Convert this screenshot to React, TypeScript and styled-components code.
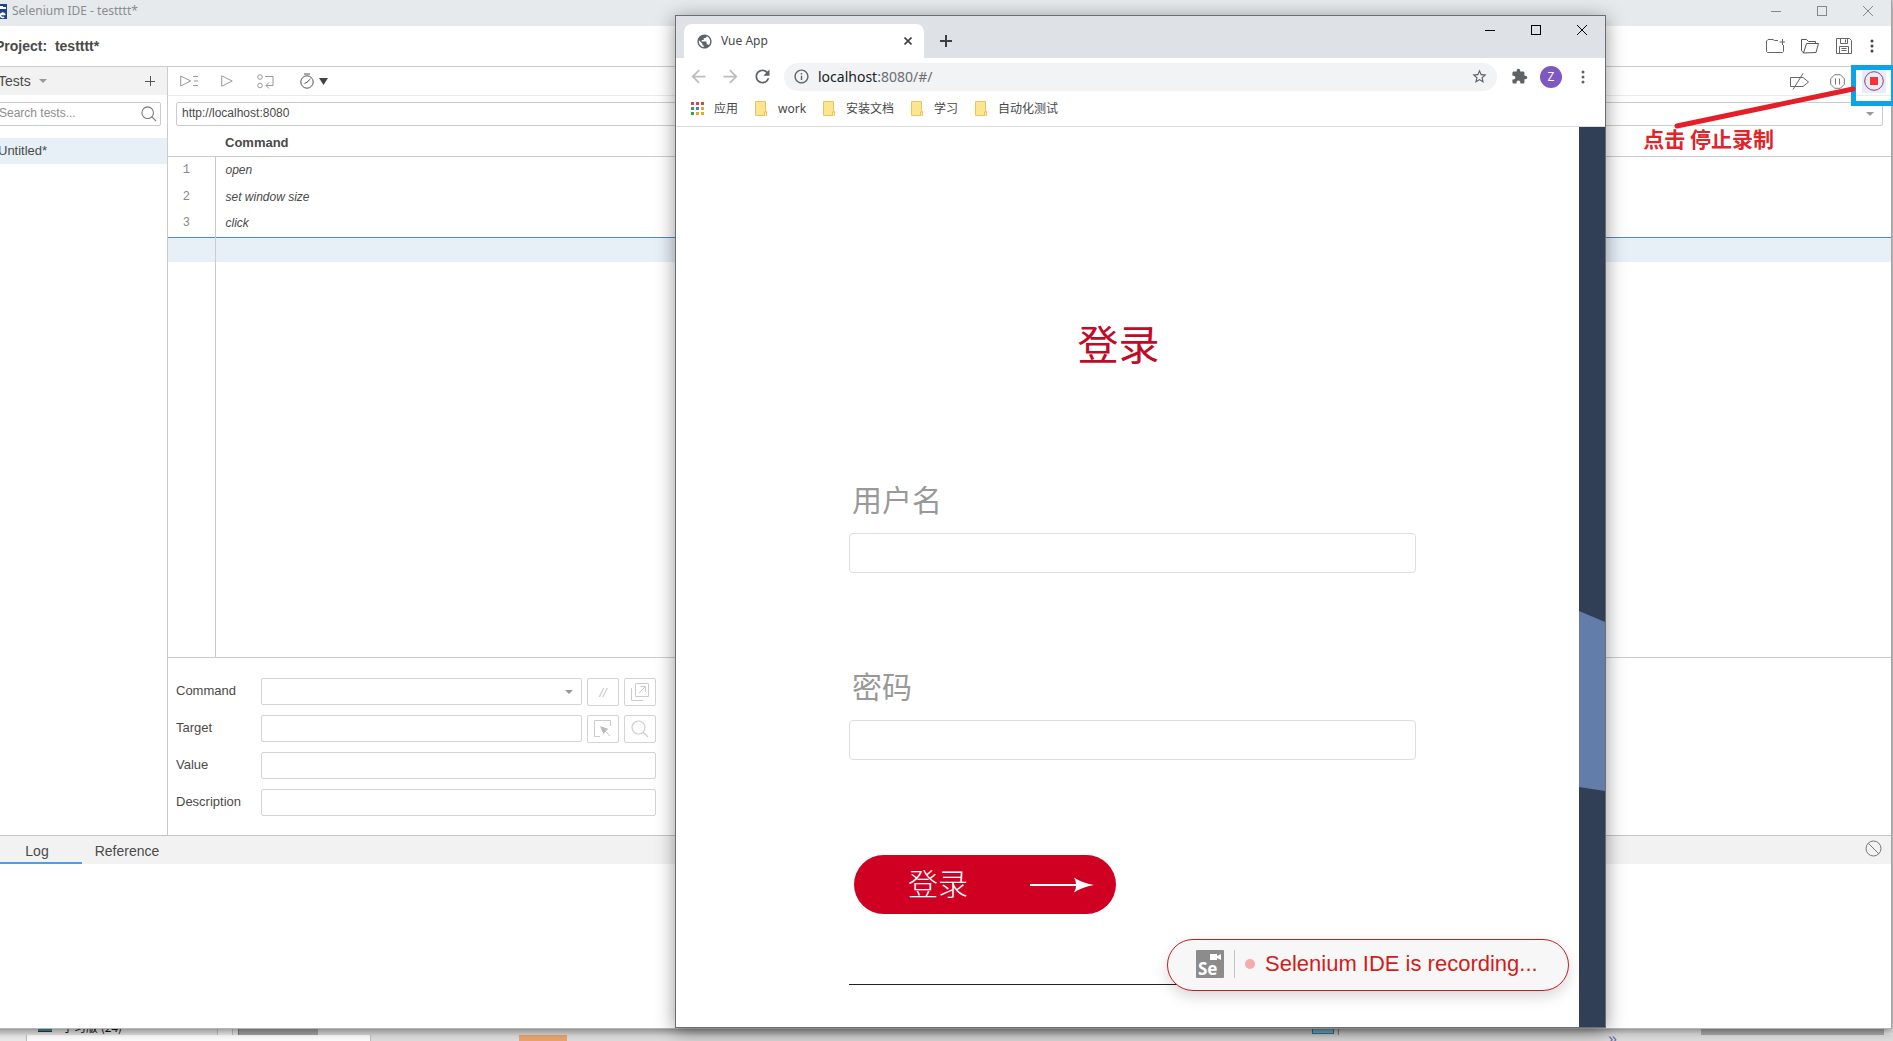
import React from "react";
import styled, { createGlobalStyle } from "styled-components";
import {
  MdArrowBack,
  MdArrowForward,
  MdExtension,
  MdInfoOutline,
  MdPublic,
  MdRefresh,
  MdStarBorder,
} from "react-icons/md";

const sans = `"Liberation Sans", "Noto Sans CJK SC", sans-serif`;
const ui = `"Noto Sans", "Noto Sans CJK SC", sans-serif`;
const cjk = `"Noto Sans CJK SC", sans-serif`;

const GlobalStyle = createGlobalStyle`
  * { box-sizing: border-box; }
  body { margin: 0; overflow: hidden; font-family: ${sans}; color: #4a4a4a; }
  button, input, select { font: inherit; color: inherit; margin: 0; }
  h1, h2, p { margin: 0; }
  svg { display: block; flex: none; }
`;

/* ---------- desktop ---------- */

const Desktop = styled.div`
  position: relative;
  height: 100vh;
  overflow: hidden;
  display: flex;
  flex-direction: column;
  justify-content: flex-end;
  background: #dedede;
`;

const UpperStrip = styled.div`
  display: flex;
  height: 7px;
  overflow: hidden;
  background: #d3d3d3;
`;

const LowerStrip = styled.div`
  display: flex;
  height: 6px;
  overflow: hidden;
  background: #dadada;
`;

const Piece = styled.div<{ $w?: number; $bg?: string; $edge?: string }>`
  display: flex;
  align-items: flex-end;
  flex: ${(p) => (p.$w ? `0 0 ${p.$w}px` : "1")};
  height: 100%;
  background: ${(p) => p.$bg || "transparent"};
  border: 0 solid ${(p) => p.$edge || "transparent"};
  border-right-width: ${(p) => (p.$edge ? 1 : 0)}px;
`;

const TealChip = styled.span`
  align-self: flex-start;
  width: 14px;
  height: 4px;
  margin-left: 38px;
  background: #3d8c92;
  border-bottom: 1px solid #2b3d42;
`;

const HiddenLabel = styled.span`
  margin: 0 0 1px 10px;
  font: 12px/14px ${cjk};
  color: #111;
  white-space: nowrap;
`;

const BlueChip = styled.span`
  width: 22px;
  height: 6px;
  align-self: flex-start;
  margin: 0 4px 0 auto;
  background: #8dbdd6;
  border: 1px solid #2f81a8;
  border-top: 0;
`;

const More = styled.span`
  font: 16px/8px ${sans};
  color: #6a6aa8;
  align-self: flex-start;
`;

/* ---------- Selenium IDE window ---------- */

const IdeWindow = styled.section`
  position: absolute;
  inset: 0 1px 12px -8px;
  display: flex;
  flex-direction: column;
  background: #fff;
  border-right: 1px solid #a4a4a4;
  border-bottom: 1px solid #b5b5b5;
  box-shadow: 0 2px 8px rgba(0, 0, 0, 0.45);
`;

const IdeTitle = styled.header`
  display: flex;
  height: 26px;
  padding-bottom: 4px;
  align-items: center;
  background: #e6eaed;
  color: #8a8c8e;
  font: 12px/16px ${ui};
`;

const IdeTitleText = styled.span`
  flex: 1;
  padding-left: 5px;
`;

const WindowButton = styled.button`
  width: 46px;
  height: 20px;
  padding: 0;
  border: 0;
  background: none;
  display: grid;
  place-items: center;
`;

const IdeHeader = styled.div`
  display: flex;
  align-items: center;
  height: 41px;
  padding: 0 14px 0 3px;
  gap: 12px;
  border-bottom: 1px solid #ccc;
`;

const ProjectName = styled.h1`
  flex: 1;
  font-size: 14px;
  line-height: 18px;
  font-weight: bold;
  white-space: pre;
`;

const IconButton = styled.button<{ $w?: number; $active?: boolean; $end?: boolean }>`
  display: flex;
  align-items: center;
  justify-content: ${(p) => (p.$end ? "flex-end" : "center")};
  gap: 5px;
  width: ${(p) => p.$w || 24}px;
  height: 24px;
  padding: 0;
  border: 0;
  background: ${(p) => (p.$active ? "#e3edfb" : "none")};
`;

const IdeBody = styled.div`
  display: flex;
  flex: 1;
  min-height: 0;
`;

const Sidebar = styled.aside`
  width: 176px;
  border-right: 1px solid #ccc;
`;

const SidebarHead = styled.div`
  display: flex;
  align-items: center;
  height: 28px;
  padding: 0 5px 0 6px;
  gap: 8px;
  background: #f2f2f2;
  font-size: 14px;
`;

const Grow = styled.span`
  flex: 1;
`;

const SearchBox = styled.label`
  display: flex;
  align-items: center;
  height: 24px;
  margin: 7px 6px 12px 0;
  padding: 0 3px 0 6px;
  border: 1px solid #ccc;
  border-radius: 2px;
`;

const BareInput = styled.input`
  flex: 1;
  min-width: 0;
  padding: 0 0 2px;
  border: 0;
  outline: 0;
  background: none;
  font-size: 12px;
  line-height: 16px;
  &::placeholder {
    color: #8e8e8e;
  }
`;

const TestItem = styled.div`
  height: 26px;
  padding-left: 6px;
  background: #e7eff7;
  font-size: 13px;
  line-height: 26px;
`;

const Editor = styled.main`
  display: flex;
  flex: 1;
  flex-direction: column;
`;

const Toolbar = styled.div`
  display: flex;
  align-items: center;
  gap: 14px;
  height: 29px;
  padding: 0 5px 0 9px;
  border-bottom: 1px solid #ebebeb;
`;

const ToolbarEnd = styled.div`
  display: flex;
  gap: 13px;
  margin-left: auto;
`;

const UrlBox = styled.div`
  display: flex;
  align-items: center;
  height: 24px;
  margin: 6px 8px 0;
  padding: 0 2px 0 5px;
  border: 1px solid #ccc;
  border-radius: 2px;
`;

const TableArea = styled.div`
  flex: 1;
  display: flex;
`;

const CommandTable = styled.table`
  width: 100%;
  height: 100%;
  border-collapse: collapse;
  font-size: 12px;
  font-style: italic;
`;

const HeadCell = styled.th<{ $w?: number }>`
  width: ${(p) => (p.$w ? `${p.$w}px` : "auto")};
  height: 30px;
  padding: 5px 0 0 10px;
  border-bottom: 1px solid #ccc;
  text-align: left;
  font: bold 13px/16px ${sans};
`;

const NumberCell = styled.td`
  width: 47px;
  height: 27px;
  padding: 0 10px 0 0;
  border-right: 1px solid #ccc;
  text-align: center;
  color: #888;
  font: 12px/16px "Liberation Mono", monospace;
`;

const CommandCell = styled.td`
  padding: 0 0 0 10px;
`;

const BlankRow = styled.tr`
  background: #e7eff7;
  border-top: 1px solid #4f8ac9;
  td {
    height: 25px;
  }
`;

const RestRow = styled.tr`
  td {
    height: auto;
  }
`;

const DetailForm = styled.form`
  display: flex;
  flex-direction: column;
  gap: 9px;
  padding: 20px 8px 18px;
  border-top: 1px solid #ccc;
`;

const FieldRow = styled.div`
  display: flex;
  align-items: flex-start;
  gap: 5px;
  width: 480px;
  height: 28px;
`;

const FieldLabel = styled.label`
  width: 80px;
  font-size: 13px;
  line-height: 26px;
`;

const FieldInput = styled.input`
  flex: 1;
  min-width: 0;
  height: 27px;
  border: 1px solid #d4d4d4;
  border-radius: 2px;
  background: #fff;
`;

const SelectWrap = styled.div`
  display: flex;
  flex: 1;
  align-items: center;
  height: 27px;
  padding-right: 8px;
  border: 1px solid #d4d4d4;
  border-radius: 2px;
`;

const FieldSelect = styled.select`
  flex: 1;
  height: 25px;
  border: 0;
  background: none;
  appearance: none;
`;

const FieldButton = styled.button`
  display: grid;
  place-items: center;
  width: 32px;
  height: 28px;
  padding: 0;
  border: 1px solid #d4d4d4;
  border-radius: 2px;
  background: #fff;
  color: #c2c2c2;
  font-size: 13px;
  font-style: italic;
`;

const Console = styled.section`
  height: 193px;
  border-top: 1px solid #c4c4c4;
`;

const ConsoleTabs = styled.div`
  display: flex;
  align-items: stretch;
  height: 28px;
  padding-right: 8px;
  background: #f2f2f2;
`;

const ConsoleTab = styled.button<{ $active?: boolean }>`
  width: 90px;
  padding: 3px 0 0;
  border: 0;
  border-bottom: 2px solid ${(p) => (p.$active ? "#4a9fe8" : "transparent")};
  background: none;
  font-size: 14px;
  line-height: 20px;
`;

/* ---------- Chrome window ---------- */

const ChromeWindow = styled.section`
  position: absolute;
  inset: 15px 287px 13px 675px;
  display: flex;
  flex-direction: column;
  border: 1px solid #6c6f72;
  background: #fff;
  box-shadow: 0 3px 18px rgba(0, 0, 0, 0.42);
`;

const TabStrip = styled.div`
  display: flex;
  align-items: flex-start;
  height: 42px;
  padding-left: 8px;
  background: #dee1e6;
`;

const Tab = styled.div`
  display: flex;
  align-items: center;
  align-self: flex-end;
  gap: 8px;
  width: 240px;
  height: 34px;
  padding: 0 12px;
  border-radius: 8px 8px 0 0;
  background: #fff;
  color: #45484c;
  font: 12px/16px ${ui};
`;

const NewTab = styled.button`
  width: 44px;
  height: 42px;
  padding: 8px 0 0;
  border: 0;
  background: none;
  display: grid;
  place-items: center;
`;

const ChromeControls = styled.div`
  display: flex;
  margin-left: auto;
  padding-top: 4px;
`;

const AddressRow = styled.div`
  display: flex;
  align-items: center;
  gap: 10px;
  height: 37px;
  padding: 0 11px;
  color: #5f6368;
`;

const NavButton = styled.button<{ $dim?: boolean }>`
  display: grid;
  place-items: center;
  width: 22px;
  height: 22px;
  padding: 0;
  border: 0;
  background: none;
  color: ${(p) => (p.$dim ? "#babcbe" : "#5f6368")};
`;

const Omnibox = styled.div`
  display: flex;
  flex: 1;
  align-items: center;
  gap: 8px;
  height: 28px;
  margin: 0 1px;
  padding: 0 9px;
  border-radius: 14px;
  background: #f1f3f4;
`;

const Address = styled.span`
  flex: 1;
  font: 14px/20px ${ui};
  color: #6a6e73;
  b {
    font-weight: normal;
    color: #202124;
  }
`;

const Avatar = styled.button`
  width: 22px;
  height: 22px;
  padding: 0;
  border: 0;
  border-radius: 50%;
  background: #7e57c2;
  color: #fff;
  font: 12px/22px ${ui};
`;

const Bookmarks = styled.nav`
  display: flex;
  align-items: center;
  gap: 17px;
  height: 32px;
  padding: 0 15px 4px;
  border-bottom: 1px solid #dadce0;
`;

const Bookmark = styled.a`
  display: flex;
  align-items: center;
  gap: 10px;
  color: #45484c;
  font: 12px/20px ${ui};
  text-decoration: none;
`;

const Page = styled.div`
  display: flex;
  flex: 1;
  min-height: 0;
`;

const LoginForm = styled.form`
  flex: 1;
  display: flex;
  flex-direction: column;
  padding: 191px 163px 0 173px;
  font-family: ${cjk};
`;

const LoginTitle = styled.h2`
  padding-right: 28px;
  margin-bottom: 112px;
  color: #c00a28;
  text-align: center;
  font-size: 41px;
  line-height: 48px;
  font-weight: 400;
`;

const LoginLabel = styled.label`
  margin-bottom: 15px;
  padding-left: 3px;
  color: #999;
  font-size: 30px;
  line-height: 40px;
`;

const LoginInput = styled.input`
  height: 40px;
  margin-bottom: 92px;
  padding: 0 12px;
  border: 1px solid #dcdfe0;
  border-radius: 4px;
`;

const LoginButton = styled.button`
  display: flex;
  align-items: center;
  justify-content: space-between;
  width: 262px;
  height: 59px;
  margin: 3px 0 70px 5px;
  padding: 0 22px 0 54px;
  border: 0;
  border-radius: 30px;
  background: #d00023;
  color: #fff;
  font-size: 30px;
  line-height: 40px;
  font-weight: 300;
`;

const ButtonText = styled.span`
  padding-bottom: 5px;
`;

const Rule = styled.hr`
  width: 100%;
  height: 1px;
  margin: 0;
  border: 0;
  background: #222;
`;

const Recording = styled.div`
  position: absolute;
  right: 36px;
  bottom: 36px;
  display: flex;
  align-items: center;
  width: 402px;
  height: 52px;
  padding: 0 28px 2px;
  gap: 10px;
  border: 1px solid #c2201c;
  border-radius: 26px;
  background: #f7f7f7;
  box-shadow: 0 6px 14px rgba(0, 0, 0, 0.15);
  color: #d21d1a;
  font: 22px/28px ${sans};
  white-space: nowrap;
`;

const SeBadge = styled.span`
  position: relative;
  display: flex;
  align-items: flex-end;
  width: 28px;
  height: 28px;
  padding-left: 2px;
  border-radius: 1px;
  background: #8c8c8c;
  color: #fff;
  font: bold 17px/18px ${ui};
`;

const Camera = styled.svg`
  position: absolute;
  top: 4px;
  right: 3px;
`;

const Divider = styled.span`
  width: 1px;
  height: 28px;
  background: #c4c4c4;
`;

const Dot = styled.span`
  width: 10px;
  height: 10px;
  border-radius: 50%;
  background: #f3abab;
`;

/* ---------- annotation ---------- */

const Highlight = styled.div`
  position: absolute;
  top: 65px;
  right: -3px;
  width: 45px;
  height: 41px;
  border: 5px solid #0ea2e6;
`;

const Pointer = styled.svg`
  position: absolute;
  top: 84px;
  right: 36px;
`;

const Note = styled.p`
  position: absolute;
  top: 123px;
  right: 119px;
  color: #e1232a;
  font: bold 21px/30px ${cjk};
`;

const Min = ({ c }: { c: string }) => (
  <svg width="10" height="10" stroke={c}>
    <path d="M0 5.5h10" />
  </svg>
);
const Max = ({ c }: { c: string }) => (
  <svg width="10" height="10" stroke={c} fill="none">
    <rect x=".5" y=".5" width="9" height="9" />
  </svg>
);
const Close = ({ c }: { c: string }) => (
  <svg width="10" height="10" stroke={c}>
    <path d="M0 0l10 10M10 0L0 10" />
  </svg>
);
const Caret = ({ c = "#999", w = 8, h = 4 }: { c?: string; w?: number; h?: number }) => (
  <svg width={w} height={h} fill={c}>
    <path d={`M0 0h${w}L${w / 2} ${h}z`} />
  </svg>
);
const Magnifier = ({ c, size = 18 }: { c: string; size?: number }) => (
  <svg width={size} height={size} viewBox="0 0 18 18" fill="none" stroke={c} strokeWidth="1.2">
    <circle cx="7.5" cy="7.5" r="6.5" />
    <path d="M12 12l5 5" />
  </svg>
);
const Folder = () => (
  <svg width="13" height="15" viewBox="0 0 13 15">
    <path d="M.5 .5h10v10h1v4H.5z" fill="#fde58f" stroke="#e6c55f" />
    <path d="M9.500 14.500v-3.500h2v3.500" fill="#fff0b5" stroke="#e6c55f" />
  </svg>
);
const Dots = ({ c }: { c: string }) => (
  <svg width="4" height="14" fill={c}>
    <circle cx="2" cy="2" r="1.500" />
    <circle cx="2" cy="7" r="1.500" />
    <circle cx="2" cy="12" r="1.500" />
  </svg>
);
const AppsGrid = () => {
  const colors = ["#d04a44", "#d04a44", "#d04a44", "#3c9a5c", "#4180d0", "#e2a92c", "#3c9a5c", "#e2a92c", "#e2a92c"];
  return (
    <svg width="13" height="13">
      {colors.map((c, i) => (
        <rect key={i} x={(i % 3) * 5} y={Math.floor(i / 3) * 5} width="3" height="3" fill={c} />
      ))}
    </svg>
  );
};

const bookmarks = ["work", "安装文档", "学习", "自动化测试"];
const commands = ["open", "set window size", "click"];

function SeleniumIde() {
  return (
    <IdeWindow>
      <IdeTitle>
        <svg width="15" height="15" viewBox="0 0 15 15">
          <path d="M0 0h15v15H0z" fill="#1d4489" />
          <path d="M7 2h4v1h3v2H7z" fill="#fff" />
          <path d="M9 10.500h4.200M13 11a2.300 2.300 0 1 0-.8 2" stroke="#fff" strokeWidth="1.400" fill="none" />
        </svg>
        <IdeTitleText>Selenium IDE - testttt*</IdeTitleText>
        <WindowButton aria-label="Minimize"><Min c="#85888a" /></WindowButton>
        <WindowButton aria-label="Maximize"><Max c="#85888a" /></WindowButton>
        <WindowButton aria-label="Close"><Close c="#85888a" /></WindowButton>
      </IdeTitle>
      <IdeHeader>
        <ProjectName>{"Project:  testttt*"}</ProjectName>
        <IconButton $w={22} aria-label="New project">
          <svg width="20" height="16" fill="none" stroke="#666">
            <path d="M12 2.500H8.500L7 1.500H2L.5 3v10.500l1 1h15l1-1V7M13.500 4h5.500M16.500 1v6" />
          </svg>
        </IconButton>
        <IconButton $w={22} aria-label="Open project">
          <svg width="18" height="16" fill="none" stroke="#555">
            <path d="M2.500 15L.5 12.500v-11h5l2 2h7v2M2.500 15l3-9.500h12L15 14.500z" strokeLinejoin="round" />
          </svg>
        </IconButton>
        <IconButton $w={22} aria-label="Save project">
          <svg width="16" height="16" fill="none" stroke="#666">
            <path d="M.5 .5h13l2 2v13H.5zM4.500 .5v5h7v-5M9.500 1.500v3M3.500 15V8.500h9V15M5.500 10.500h5M5.500 12.500h5" />
          </svg>
        </IconButton>
        <IconButton $w={10} aria-label="Menu"><Dots c="#444" /></IconButton>
      </IdeHeader>
      <IdeBody>
        <Sidebar>
          <SidebarHead>
            <span>Tests</span>
            <Caret />
            <Grow />
            <IconButton aria-label="Add test">
              <svg width="10" height="10" stroke="#555">
                <path d="M0 5.500h10M5.500 0v10" />
              </svg>
            </IconButton>
          </SidebarHead>
          <SearchBox>
            <BareInput placeholder="Search tests..." aria-label="Search tests" />
            <Magnifier c="#777" size={16} />
          </SearchBox>
          <TestItem>Untitled*</TestItem>
        </Sidebar>
        <Editor>
          <Toolbar>
            <IconButton aria-label="Run all tests">
              <svg width="19" height="12" fill="none" stroke="#999">
                <path d="M.7 1v10l10-5zM13 1.500h5M14 6h4M13 10.500h5" />
              </svg>
            </IconButton>
            <IconButton aria-label="Run current test">
              <svg width="12" height="12" fill="none" stroke="#999">
                <path d="M.7 .8v10.400l10.500-5.200z" />
              </svg>
            </IconButton>
            <IconButton aria-label="Step over">
              <svg width="17" height="15" fill="none" stroke="#999">
                <circle cx="3" cy="3" r="2.300" />
                <circle cx="3" cy="11.500" r="2.300" />
                <path d="M8 2.500h8v9H9M12 8.500l-3 3 3 3" />
              </svg>
            </IconButton>
            <IconButton $w={37} $end aria-label="Test speed">
              <svg width="14" height="16" fill="none" stroke="#555">
                <circle cx="7" cy="9" r="6.200" />
                <path d="M4 1h6M7 9l3.500-3M4.500 10.500l3-1.500" />
              </svg>
              <Caret c="#444" w={9} h={7} />
            </IconButton>
            <ToolbarEnd>
              <IconButton aria-label="Disable breakpoints">
                <svg width="20" height="17" fill="none" stroke="#666">
                  <path d="M.5 4.500h12.500l5.500 4.500-5.500 4.500H.5zM3 16.500L13 .5" />
                </svg>
              </IconButton>
              <IconButton aria-label="Pause on exceptions">
                <svg width="15" height="15" fill="none" stroke="#777">
                  <path d="M4.700 .7h5.600l4 4v5.600l-4 4H4.700l-4-4V4.700zM5.500 4.500v6M9.500 4.500v6" />
                </svg>
              </IconButton>
              <IconButton $active aria-label="Stop recording">
                <svg width="20" height="20" fill="none">
                  <circle cx="10" cy="10" r="9.300" stroke="#a43a50" />
                  <path d="M6 6h8v8H6z" fill="#fb3034" />
                </svg>
              </IconButton>
            </ToolbarEnd>
          </Toolbar>
          <UrlBox>
            <BareInput defaultValue="http://localhost:8080" aria-label="Base URL" />
            <IconButton $w={20} aria-label="Recent URLs"><Caret /></IconButton>
          </UrlBox>
          <TableArea>
            <CommandTable>
              <thead>
                <tr>
                  <HeadCell $w={47} />
                  <HeadCell>Command</HeadCell>
                </tr>
              </thead>
              <tbody>
                {commands.map((c, i) => (
                  <tr key={c}>
                    <NumberCell>{i + 1}</NumberCell>
                    <CommandCell>{c}</CommandCell>
                  </tr>
                ))}
                <BlankRow>
                  <NumberCell />
                  <CommandCell />
                </BlankRow>
                <RestRow>
                  <NumberCell />
                  <CommandCell />
                </RestRow>
              </tbody>
            </CommandTable>
          </TableArea>
          <DetailForm>
            <FieldRow>
              <FieldLabel htmlFor="command">Command</FieldLabel>
              <SelectWrap>
                <FieldSelect id="command" />
                <Caret />
              </SelectWrap>
              <FieldButton type="button" aria-label="Disable command">//</FieldButton>
              <FieldButton type="button" aria-label="Open in new window">
                <svg width="18" height="18" fill="none" stroke="#ccc">
                  <path d="M4.500 .5h13v13h-13zM.5 5v12.500H12M8 10l6-6M9.500 3.500h5v5" />
                </svg>
              </FieldButton>
            </FieldRow>
            <FieldRow>
              <FieldLabel htmlFor="target">Target</FieldLabel>
              <FieldInput id="target" />
              <FieldButton type="button" aria-label="Select target in page">
                <svg width="18" height="18" fill="none" stroke="#ccc">
                  <path d="M6 16.500H.5V.5h16V6M11 11l5 5" />
                  <path d="M6 6l8.500 3-3 2-1.800 3.500z" fill="#bbb" stroke="none" />
                </svg>
              </FieldButton>
              <FieldButton type="button" aria-label="Find target in page"><Magnifier c="#ccc" /></FieldButton>
            </FieldRow>
            <FieldRow>
              <FieldLabel htmlFor="value">Value</FieldLabel>
              <FieldInput id="value" />
            </FieldRow>
            <FieldRow>
              <FieldLabel htmlFor="description">Description</FieldLabel>
              <FieldInput id="description" />
            </FieldRow>
          </DetailForm>
        </Editor>
      </IdeBody>
      <Console>
        <ConsoleTabs>
          <ConsoleTab $active>Log</ConsoleTab>
          <ConsoleTab>Reference</ConsoleTab>
          <Grow />
          <IconButton $w={20} aria-label="Clear log">
            <svg width="17" height="17" fill="none" stroke="#777">
              <circle cx="8.500" cy="8.500" r="7.500" />
              <path d="M3.200 3.200l10.600 10.600" />
            </svg>
          </IconButton>
        </ConsoleTabs>
      </Console>
    </IdeWindow>
  );
}

function Chrome() {
  return (
    <ChromeWindow>
      <TabStrip>
        <Tab>
          <MdPublic size={17} color="#5f6368" />
          <span>Vue App</span>
          <Grow />
          <svg width="8" height="8" stroke="#3c4043" strokeWidth="1.600">
            <path d="M.5 .5l7 7M7.500 .5l-7 7" />
          </svg>
        </Tab>
        <NewTab aria-label="New tab">
          <svg width="12" height="12" stroke="#3c4043" strokeWidth="2">
            <path d="M0 6h12M6 0v12" />
          </svg>
        </NewTab>
        <ChromeControls>
          <WindowButton aria-label="Minimize"><Min c="#000" /></WindowButton>
          <WindowButton aria-label="Maximize"><Max c="#000" /></WindowButton>
          <WindowButton aria-label="Close"><Close c="#000" /></WindowButton>
        </ChromeControls>
      </TabStrip>
      <AddressRow>
        <NavButton $dim aria-label="Back"><MdArrowBack size={21} /></NavButton>
        <NavButton $dim aria-label="Forward"><MdArrowForward size={21} /></NavButton>
        <NavButton aria-label="Reload"><MdRefresh size={21} /></NavButton>
        <Omnibox>
          <MdInfoOutline size={17} />
          <Address><b>localhost</b>:8080/#/</Address>
          <MdStarBorder size={17} />
        </Omnibox>
        <NavButton aria-label="Extensions"><MdExtension size={17} /></NavButton>
        <Avatar>Z</Avatar>
        <NavButton aria-label="Chrome menu"><Dots c="#5f6368" /></NavButton>
      </AddressRow>
      <Bookmarks>
        <Bookmark href="#"><AppsGrid />应用</Bookmark>
        {bookmarks.map((b) => (
          <Bookmark href="#" key={b}><Folder />{b}</Bookmark>
        ))}
      </Bookmarks>
      <Page>
        <LoginForm>
          <LoginTitle>登录</LoginTitle>
          <LoginLabel htmlFor="user">用户名</LoginLabel>
          <LoginInput id="user" />
          <LoginLabel htmlFor="password">密码</LoginLabel>
          <LoginInput id="password" type="password" />
          <LoginButton type="button">
            <ButtonText>登录</ButtonText>
            <svg width="64" height="16" fill="#fff">
              <path d="M0 7h46Q46 4 44 .5Q52 6 64 8Q52 10 44 15.500Q46 12 46 9H0z" />
            </svg>
          </LoginButton>
          <Rule />
        </LoginForm>
        <svg width="26" height="900" viewBox="0 0 26 900">
          <path d="M0 0h26v900H0z" fill="#313f56" />
          <path d="M0 484l26 11v169L0 660z" fill="#637dab" />
        </svg>
      </Page>
      <Recording>
        <SeBadge>
          Se
          <Camera width="11" height="6" fill="#fff">
            <path d="M0 0h7v2l4-2v6L7 4v2H0z" />
          </Camera>
        </SeBadge>
        <Divider />
        <Dot />
        Selenium IDE is recording...
      </Recording>
    </ChromeWindow>
  );
}

function BackgroundStrips() {
  return (
    <>
      <UpperStrip>
        <Piece $w={218} $bg="#e2e2e2" $edge="#c2c2c2">
          <TealChip />
          <HiddenLabel>学习版 (24)</HiddenLabel>
        </Piece>
        <Piece $w={15} $bg="#ececec" $edge="#c2c2c2" />
        <Piece $w={6} $bg="#e4e4e4" $edge="#777" />
        <Piece $w={79} $bg="#a2a2a2" />
        <Piece $w={1021} $bg="#d6d6d6" $edge="#888"><BlueChip /></Piece>
        <Piece $bg="#dedede" />
        <Piece $w={183} $bg="#a8a8a8" />
        <Piece $w={9} $bg="#e2e2e2" />
      </UpperStrip>
      <LowerStrip>
        <Piece $w={27} $bg="#e8e8e8" $edge="#bbb" />
        <Piece $w={344} $bg="#fafafa" $edge="#bbb" />
        <Piece $w={148} />
        <Piece $w={48} $bg="#e8a26c" />
        <Piece $w={1041} />
        <Piece><More>»</More></Piece>
      </LowerStrip>
    </>
  );
}

export default function App() {
  return (
    <>
      <GlobalStyle />
      <Desktop>
        <SeleniumIde />
        <BackgroundStrips />
        <Chrome />
        <Highlight />
        <Pointer width="184" height="48" stroke="#e41f27" strokeWidth="5" strokeLinecap="round">
          <path d="M4 42L180 5" />
        </Pointer>
        <Note>点击 停止录制</Note>
      </Desktop>
    </>
  );
}
